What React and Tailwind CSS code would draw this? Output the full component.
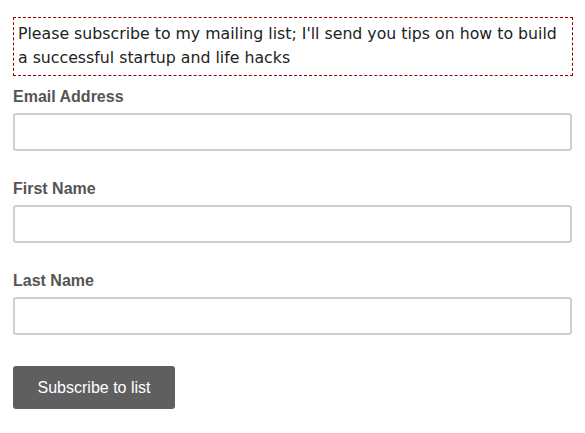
export default function App() {
  const fields = ["Email Address", "First Name", "Last Name"];
  return (
    <div className="w-[585px] h-[433px] bg-white pl-[13px] pr-[12px] pt-[17px] flex flex-col">
      <div className="border border-dashed border-[#990000] pl-[4px] pr-[4px] pt-[4px] pb-[5px] text-[15.75px] leading-[24px] text-[#222] [font-family:'DejaVu_Sans',sans-serif]">
        Please subscribe to my mailing list; I'll send you tips on how to build a successful startup and life hacks
      </div>
      <div className="flex flex-col pr-[1px] [font-family:'Liberation_Sans',Arial,sans-serif]">
        {fields.map((f, i) => (
          <div key={f} className={i === 0 ? "mt-[12px] flex flex-col" : "mt-[29px] flex flex-col"}>
            <label className="text-[16px] leading-[18px] font-bold text-[#555]">{f}</label>
            <input
              type="text"
              className="mt-[7px] h-[38px] w-full border-2 border-[#cfcfcf] rounded-[3px] bg-white outline-none"
            />
          </div>
        ))}
        <div className="mt-[31px]">
          <button className="h-[43px] w-[162px] bg-[#5f5f5f] rounded-[3px] text-white text-[16px] [font-family:'Liberation_Sans',Arial,sans-serif]">
            Subscribe to list
          </button>
        </div>
      </div>
    </div>
  );
}
